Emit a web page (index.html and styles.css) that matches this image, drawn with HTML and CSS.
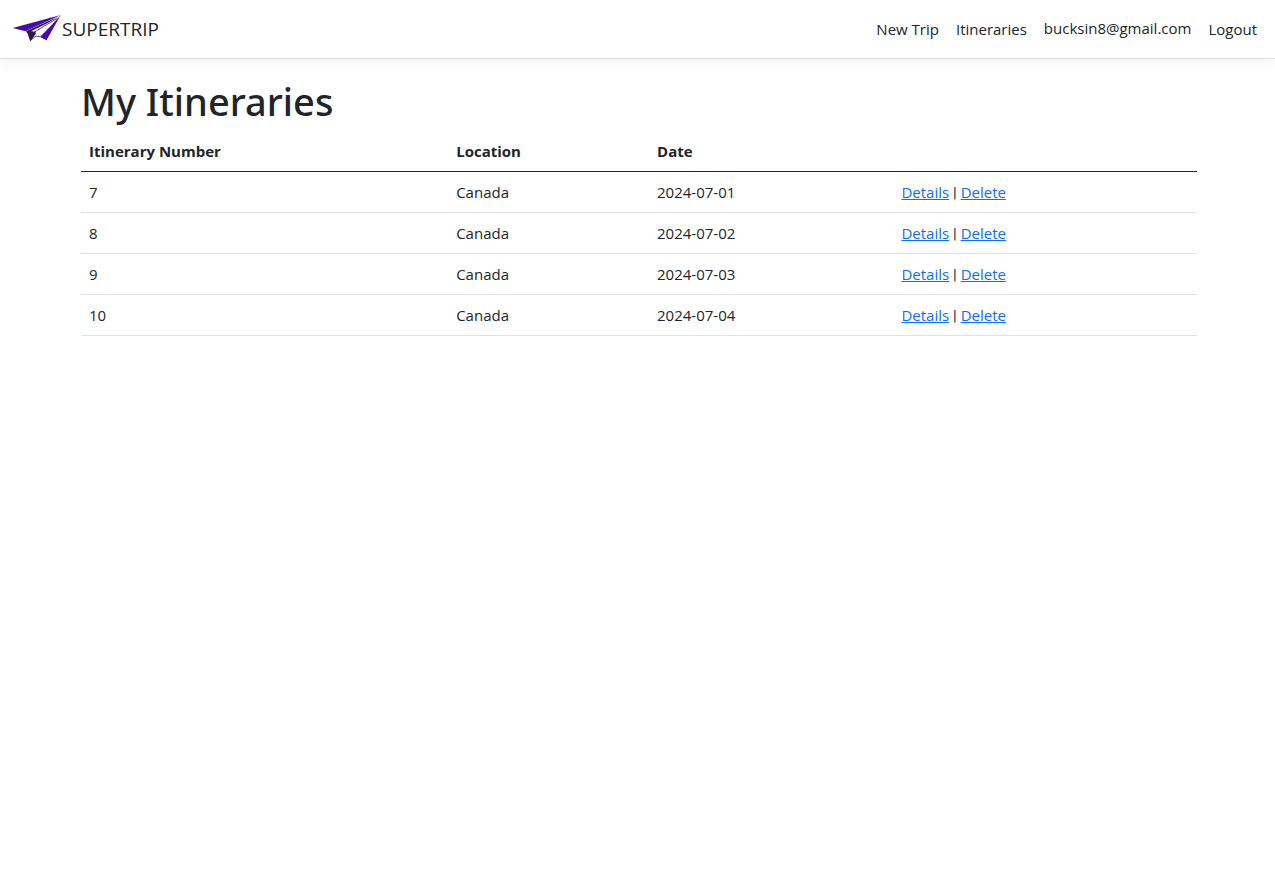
FILE: index.html
```html
<!DOCTYPE html>
<html lang="en">
<head>
  <meta charset="utf-8">
  <meta name="viewport" content="width=device-width, initial-scale=1">
  <title>My Itineraries - SUPERTRIP</title>
  <link rel="stylesheet" href="styles.css">
</head>
<body>
  <header class="navbar">
    <a class="brand" href="#">
      <svg class="brand-logo" viewBox="0 0 50 30" aria-hidden="true">
        <path fill="#4b06b0" d="M.7 14 48.700 1 13.500 17.300Z"/>
        <path fill="#2b1b45" d="M14 17.300 46 2.800 23 17 24 19.500 18.300 27.500 15.500 19.500Z"/>
        <path fill="#fff" d="M19 17.200 39 7.500 23 17.500Z"/>
        <path fill="#fff" d="M23.500 18.500 43 6.500 28 22.500Z"/>
        <path fill="none" stroke="#2b1b45" stroke-width=".8" d="M22.500 18 45 4.500M19 26 24 22 28 22.800"/>
        <path fill="#4b06b0" d="M48.700 1 34.500 26.300 28 23 41 9.500Z"/>
      </svg>
      <span>SUPERTRIP</span>
    </a>
    <nav class="nav" aria-label="Main">
      <a class="nav-link" href="#">New Trip</a>
      <a class="nav-link" href="#">Itineraries</a>
      <a class="nav-link nav-email" href="#">bucksin8@gmail.com</a>
      <button class="nav-link nav-button" type="button">Logout</button>
    </nav>
  </header>
  <main class="content">
    <h1 class="title">My Itineraries</h1>
    <table class="table">
      <colgroup>
        <col class="col-number"><col class="col-location"><col class="col-date"><col>
      </colgroup>
      <thead>
        <tr><th scope="col">Itinerary Number</th><th scope="col">Location</th><th scope="col">Date</th><th></th></tr>
      </thead>
      <tbody>
        <tr><td>7</td><td>Canada</td><td>2024-07-01</td><td><a href="#">Details</a> <span class="separator">|</span> <a href="#">Delete</a></td></tr>
        <tr><td>8</td><td>Canada</td><td>2024-07-02</td><td><a href="#">Details</a> <span class="separator">|</span> <a href="#">Delete</a></td></tr>
        <tr><td>9</td><td>Canada</td><td>2024-07-03</td><td><a href="#">Details</a> <span class="separator">|</span> <a href="#">Delete</a></td></tr>
        <tr><td>10</td><td>Canada</td><td>2024-07-04</td><td><a href="#">Details</a> <span class="separator">|</span> <a href="#">Delete</a></td></tr>
      </tbody>
    </table>
  </main>
</body>
</html>
```
FILE: styles.css
```css
* {
  box-sizing: border-box;
}

body {
  margin: 0;
  background: #fff;
  color: #212529;
  font-family: "Segoe UI", "Open Sans", "Noto Sans", sans-serif;
  font-size: 15px;
  line-height: 24px;
}

.navbar {
  display: flex;
  align-items: center;
  justify-content: space-between;
  padding: 8px 18px 8px 12px;
  min-height: 59px;
  border-bottom: 1px solid #dee2e6;
  box-shadow: 0 4px 12px rgba(0, 0, 0, 0.05);
}

.brand {
  display: flex;
  align-items: center;
  color: #212529;
  font-size: 19px;
  text-decoration: none;
}

.brand-logo {
  width: 50px;
  height: 30px;
}

.nav {
  display: flex;
  align-items: center;
  gap: 17px;
}

.nav-link {
  color: #212529;
  text-decoration: none;
}

.nav-email {
  padding-bottom: 2px;
}

.nav-button {
  padding: 0;
  border: 0;
  background: none;
  font: inherit;
  cursor: pointer;
}

.content {
  padding: 18px 78px 16px 81px;
}

.title {
  margin: 0 0 6px;
  font-family: "Segoe UI", "Noto Sans", "Open Sans", sans-serif;
  font-size: 38px;
  font-weight: 500;
  line-height: 48px;
}

.table {
  width: 100%;
  table-layout: fixed;
  border-collapse: collapse;
}

.col-number {
  width: 32.9%;
}

.col-location {
  width: 18%;
}

.col-date {
  width: 21.9%;
}

.table th,
.table td {
  padding: 8px;
  border-bottom: 1px solid #dee2e6;
  text-align: left;
}

.table thead th {
  border-bottom-color: #212529;
}

.table a {
  color: #0d6efd;
}

.separator {
  font-family: Roboto, sans-serif;
  line-height: 1;
}
```
